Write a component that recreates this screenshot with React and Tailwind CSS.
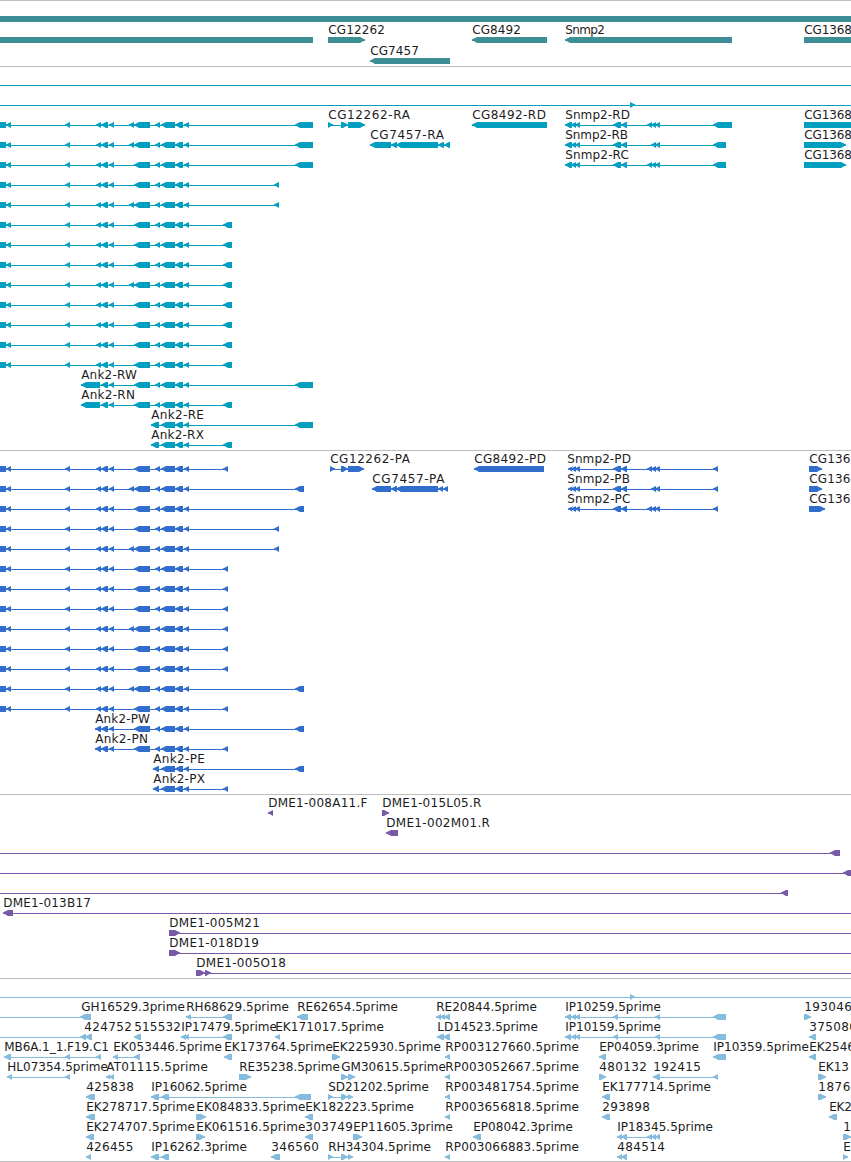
import React from 'react';

// Exon blocks: L points left, R points right, B is a plain bar.
const L = (a, b) => ({ k: 'L', a, b });
const R = (a, b) => ({ k: 'R', a, b });
const B = (a, b) => ({ k: 'B', a, b });
// Label with the left and right edge of its text.
const T = (s, a, b) => ({ s, a, b });
// Feature: blocks joined by an intron line.
const F = (blocks, from, to) => ({
  blocks,
  from: from ?? blocks[0].a,
  to: to ?? blocks[blocks.length - 1].b,
});

const core = [L(161, 175), L(175, 183), L(184, 189)];
const middle = [L(101, 108), L(109, 114), L(134, 150), L(155, 160), ...core];
const ank = (extra, end) =>
  F([
    B(0, 6), L(6, 11), L(65, 70), L(96, 101), L(101, 108), L(109, 114),
    ...(extra ? [L(129, 134)] : []),
    L(134, 150), L(155, 160), ...core, end,
  ]);
const row = (features, labels = []) => ({ features, labels });

const far = L(295, 313);
const mid = L(274, 279);
const near = L(223, 232);
const pFar = L(295, 304);
const pNear = L(223, 228);
const snmpHead = [L(565, 572), L(571, 576), L(575, 580), L(613, 621), L(621, 627)];
const snmpHeadP = [L(568, 572), L(571, 576), L(575, 580), L(613, 621), L(621, 627)];
const triple = [L(647, 652), L(651, 656), L(655, 660)];
const pair = [L(651, 656), L(655, 660)];
const ipTen = F([L(565, 571), L(571, 576), L(575, 580), L(613, 618), L(655, 660), L(713, 726)]);
const rp = F([L(445, 450)]);

const tracks = [
  {
    color: 'text-[#3e8e95]',
    pad: 'pb-[2px]',
    h: 21,
    rows: [
      row([F([B(0, 851)])]),
      row(
        [F([B(0, 313)]), F([R(328, 365)]), F([L(472, 547)]), F([L(565, 732)]), F([B(804, 851)])],
        [T('CG12262', 328, 384), T('CG8492', 472, 520), T('Snmp2', 565, 604), T('CG1368', 804, 851)],
      ),
      row([F([L(370, 450)])], [T('CG7457', 370, 418)]),
    ],
  },
  {
    color: 'text-[#009ebf]',
    pad: 'pb-[3px]',
    h: 20,
    rows: [
      row([F([], 0, 851)]),
      row([F([R(630, 635)], 0, 851)]),
      row(
        [ank(true, far), F([R(328, 333), R(341, 348), R(348, 365)]), F([L(472, 547)]), F([...snmpHead, ...triple, L(713, 732)]), F([B(804, 851)])],
        [T('CG12262-RA', 328, 409), T('CG8492-RD', 472, 545), T('Snmp2-RD', 565, 629), T('CG1368', 804, 851)],
      ),
      row(
        [ank(true, far), F([L(370, 391), L(391, 397), L(396, 438), L(438, 444), L(444, 450)]), F([...snmpHead, ...pair, L(713, 726)]), F([R(804, 846)])],
        [T('CG7457-RA', 370, 443), T('Snmp2-RB', 565, 627), T('CG1368', 804, 851)],
      ),
      row(
        [ank(false, far), F([...snmpHead, ...triple, L(713, 726)]), F([R(804, 846)])],
        [T('Snmp2-RC', 565, 628), T('CG1368', 804, 851)],
      ),
      row([ank(false, mid)]),
      row([ank(true, mid)]),
      row([ank(false, near)]),
      row([ank(false, near)]),
      row([ank(false, near)]),
      row([ank(true, near)]),
      row([ank(false, near)]),
      row([ank(false, near)]),
      row([ank(false, near)]),
      row([ank(false, near)]),
      row([F([L(81, 100), ...middle, far])], [T('Ank2-RW', 81, 136)]),
      row([F([L(81, 100), ...middle, near])], [T('Ank2-RN', 81, 134)]),
      row([F([L(151, 159), ...core, far])], [T('Ank2-RE', 151, 203)]),
      row([F([L(151, 159), ...core, near])], [T('Ank2-RX', 151, 203)]),
    ],
  },
  {
    color: 'text-[#306dcd]',
    pad: 'pb-[3px]',
    h: 20,
    rows: [
      row(
        [ank(false, pNear), F([R(330, 335), R(341, 348), R(348, 364)]), F([L(474, 544)]), F([...snmpHeadP, ...triple, L(713, 718)]), F([R(809, 822)])],
        [T('CG12262-PA', 330, 409), T('CG8492-PD', 474, 545), T('Snmp2-PD', 567, 630), T('CG136', 809, 849.5)],
      ),
      row(
        [ank(true, pFar), F([L(372, 391), L(391, 397), L(396, 438), L(438, 443), L(443, 448)]), F([...snmpHeadP, ...pair, L(713, 718)]), F([R(809, 822)])],
        [T('CG7457-PA', 372, 443.5), T('Snmp2-PB', 567, 629), T('CG136', 809, 849.5)],
      ),
      row(
        [ank(false, pFar), F([...snmpHeadP, ...triple, L(713, 718)]), F([R(809, 825)])],
        [T('Snmp2-PC', 567, 629.5), T('CG136', 809, 849.5)],
      ),
      row([ank(false, mid)]),
      row([ank(true, mid)]),
      row([ank(false, pNear)]),
      row([ank(false, pNear)]),
      row([ank(false, pNear)]),
      row([ank(true, pNear)]),
      row([ank(false, pNear)]),
      row([ank(false, pNear)]),
      row([ank(true, pFar)]),
      row([ank(false, pNear)]),
      row([F([L(95, 101), ...middle, pFar])], [T('Ank2-PW', 95, 149)]),
      row([F([L(95, 101), ...middle, pNear])], [T('Ank2-PN', 95, 147)]),
      row([F([L(153, 159), ...core, pFar])], [T('Ank2-PE', 153, 204)]),
      row([F([L(153, 159), ...core, pNear])], [T('Ank2-PX', 153, 204)]),
    ],
  },
  {
    color: 'text-[#7859a8]',
    pad: 'pb-[3px]',
    h: 20,
    rows: [
      row([F([L(268, 273)]), F([R(382, 389)])], [T('DME1-008A11.F', 268, 366.5), T('DME1-015L05.R', 382, 480.5)]),
      row([F([L(386, 398)])], [T('DME1-002M01.R', 386, 489)]),
      row([F([L(830, 840)], 0, 840)]),
      row([F([L(843, 853)], 0, 851)]),
      row([F([L(781, 788)], 0, 788)]),
      row([F([L(3, 13)], 3, 851)], [T('DME1-013B17', 3, 90)]),
      row([F([R(169, 180)], 169, 851)], [T('DME1-005M21', 169, 259)]),
      row([F([R(169, 180)], 169, 851)], [T('DME1-018D19', 169, 258)]),
      row([F([R(196, 205), R(205, 211)], 196, 851)], [T('DME1-005O18', 196, 285)]),
    ],
  },
  {
    color: 'text-[#85bbdd]',
    pad: 'pb-[2px]',
    h: 20,
    rows: [
      row([F([R(630, 635)], 0, 851)]),
      row(
        [F([L(80, 91)], 0, 91), F([L(186, 191), L(223, 232)]), F([L(297, 308)]), F([L(436, 441), L(440, 445), L(444, 450)]), ipTen, F([R(804, 811)])],
        [T('GH16529.3prime', 81, 184), T('RH68629.5prime', 186, 288), T('RE62654.5prime', 297, 397), T('RE20844.5prime', 436, 536), T('IP10259.5prime', 565, 660), T('193046', 804, 851)],
      ),
      row(
        [F([L(80, 86), L(85, 92)], 0, 92), F([L(134, 141)]), F([L(181, 186), L(184, 189), L(223, 232)]), F([L(275, 280)]), F([L(437, 444), L(443, 450)]), ipTen, F([L(809, 816)])],
        [T('424752', 84, 131), T('515532', 134, 180), T('IP17479.5prime', 181, 276), T('EK171017.5prime', 275, 383), T('LD14523.5prime', 437, 537), T('IP10159.5prime', 565, 660), T('375080', 809, 856)],
      ),
      row(
        [F([L(4, 11), L(65, 70), L(96, 101)]), F([L(113, 118), L(134, 140)]), F([L(224, 232)]), F([R(332, 340)]), rp, F([L(599, 606)]), F([L(713, 726)]), F([L(809, 816)])],
        [T('MB6A.1_1.F19.C1', 4, 108), T('EK053446.5prime', 113, 221), T('EK173764.5prime', 224, 332), T('EK225930.5prime', 332, 440), T('RP003127660.5prime', 445, 578), T('EP04059.3prime', 599, 698), T('IP10359.5prime', 713, 808), T('EK2546', 809, 854)],
      ),
      row(
        [F([L(7, 12), L(65, 70)]), F([L(106, 110), L(109, 114)]), F([R(239, 251)]), F([R(341, 348), R(348, 355)]), rp, F([R(599, 606)]), F([L(653, 660), L(713, 718)]), F([R(818, 826)])],
        [T('HL07354.5prime', 7, 107), T('AT01115.5prime', 106, 207), T('RE35238.5prime', 239, 339), T('GM30615.5prime', 341, 445), T('RP003052667.5prime', 445, 578), T('480132', 599, 646), T('192415', 653, 700), T('EK13', 818, 848)],
      ),
      row(
        [F([L(86, 95)]), F([L(151, 159), L(161, 169), L(295, 311)]), F([R(328, 333), R(341, 348), R(348, 353)]), rp, F([L(602, 610)]), F([R(818, 826)])],
        [T('425838', 86, 133), T('IP16062.5prime', 151, 246), T('SD21202.5prime', 328, 428), T('RP003481754.5prime', 445, 578), T('EK177714.5prime', 602, 710), T('1876', 818, 849.5)],
      ),
      row(
        [F([L(86, 95)]), F([R(196, 206)]), F([L(305, 313)]), rp, F([L(602, 610)]), F([L(829, 837)])],
        [T('EK278717.5prime', 86, 194), T('EK084833.5prime', 196, 304.5), T('EK182223.5prime', 305, 413), T('RP003656818.5prime', 445, 578), T('293898', 602, 649), T('EK2', 829, 851)],
      ),
      row(
        [F([L(86, 94)]), F([R(196, 205)]), F([L(305, 313)]), F([R(353, 362)]), F([L(473, 481)]), F([L(617, 622), L(621, 627), ...triple]), F([R(843, 851)])],
        [T('EK274707.5prime', 86, 194), T('EK061516.5prime', 196, 304.5), T('303749', 305, 352), T('EP11605.3prime', 353, 452), T('EP08042.3prime', 473, 572), T('IP18345.5prime', 617, 712), T('1', 843, 850)],
      ),
      row(
        [F([L(86, 91)]), F([L(151, 159), L(161, 169)]), F([L(271, 280)]), F([R(328, 333), R(341, 348), R(348, 353)]), rp, F([L(617, 622), L(621, 627)]), F([R(843, 848)])],
        [T('426455', 86, 132.5), T('IP16262.3prime', 151, 246), T('346560', 271, 318), T('RH34304.5prime', 328, 430), T('RP003066883.5prime', 445, 578), T('484514', 617, 664), T('E', 843, 850)],
      ),
    ],
  },
];

function Block({ k, a, b, y }) {
  const t = y - 3;
  const c = y - 0.3;
  const e = y + 3;
  let points = `${a},${t} ${b},${t} ${b},${e} ${a},${e}`;
  if (k === 'L') points = `${a - 0.5},${c} ${a + 5},${t} ${b},${t} ${b},${e} ${a + 5},${e}`;
  if (k === 'R') points = `${a},${t} ${b - 5},${t} ${b + 0.5},${c} ${b - 5},${e} ${a},${e}`;
  return <polygon points={points} />;
}

function Row({ data, height }) {
  const y = 18;
  return (
    <svg width="851" height={height} className="block shrink-0 overflow-visible" fill="currentColor">
      {data.features.map((f, i) => (
        <g key={i}>
          <rect x={f.from} y={y} width={f.to - f.from} height="1" shapeRendering="crispEdges" />
          {f.blocks.map((b, j) => (
            <Block key={j} {...b} y={y} />
          ))}
        </g>
      ))}
      {data.labels.map((l, i) => (
        <text
          key={i}
          x={l.a + 0.2}
          y={y - 6}
          textLength={l.b - l.a + 0.7}
          lengthAdjust="spacing"
          className="fill-[#1c1c1c] font-['DejaVu_Sans',sans-serif] text-[12px]"
        >
          {l.s}
        </text>
      ))}
    </svg>
  );
}

export default function App() {
  return (
    <main className="flex h-[1162px] w-[851px] flex-col overflow-hidden border-b border-[#bebebe] bg-white">
      {tracks.map((t, i) => (
        <section key={i} className={`flex shrink-0 flex-col border-t border-[#bebebe] ${t.color} ${t.pad}`}>
          {t.rows.map((r, j) => (
            <Row key={j} data={r} height={t.h} />
          ))}
        </section>
      ))}
    </main>
  );
}
